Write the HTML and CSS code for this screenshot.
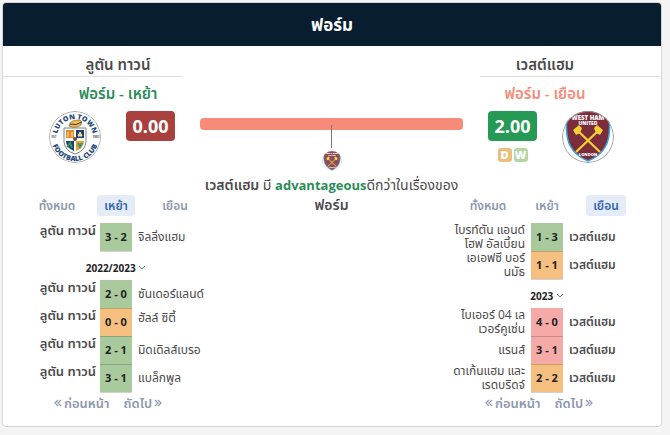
FILE: index.html
```html
<!DOCTYPE html>
<html lang="th">
<head>
<meta charset="utf-8">
<meta name="viewport" content="width=device-width, initial-scale=1">
<title>ฟอร์ม</title>
<link rel="stylesheet" href="styles.css">
</head>
<body>
<svg class="defs" aria-hidden="true">
  <symbol id="westham" viewBox="0 0 52 52">
    <circle cx="26" cy="26" r="25.5" fill="#fff"/>
    <path d="M7-2H45Q49 8 47 24Q45 42 26 50Q7 42 5 24Q3 8 7-2Z" fill="#7c2c3b" stroke="#37a5dc" stroke-width="1.6"/>
    <path d="M16 20 38 41M36 20 14 41" stroke="#f5d033" stroke-width="2.2"/>
    <path d="M11 19 17 14 20 17 18 22 14 24ZM41 19 35 14 32 17 34 22 38 24Z" fill="#f5d033"/>
    <text x="26" y="9" class="crest-wh">WEST HAM</text>
    <text x="26" y="14" class="crest-utd">UNITED</text>
    <text x="26" y="45" class="crest-london">LONDON</text>
    <circle cx="26" cy="26" r="25.5" fill="none" stroke="#9a9a9a"/>
  </symbol>
  <symbol id="luton" viewBox="0 0 52 52">
    <circle cx="26" cy="26" r="25.5" fill="#fff" stroke="#a8a8a8"/>
    <path id="arc-top" d="M8 26A18 18 0 0 1 44 26" fill="none"/>
    <path id="arc-bottom" d="M2 26A24 24 0 0 0 50 26" fill="none"/>
    <text class="crest-ring"><textPath href="#arc-top" startOffset="50%">LUTON TOWN</textPath></text>
    <text class="crest-ring"><textPath href="#arc-bottom" startOffset="50%">FOOTBALL CLUB</textPath></text>
    <text x="5" y="27" class="crest-year">EST</text>
    <text x="47" y="27" class="crest-year">1885</text>
    <path d="M15 17H37V31Q36 40 26 43Q16 40 15 31Z" fill="#fff" stroke="#788291"/>
    <path d="M17 19H25V27H17Z" fill="#e58a25"/><path d="M27 19H35V27H27Z" fill="#203e70"/>
    <path d="M17 30H25V40Q17 37 17 30Z" fill="#203e70"/><path d="M27 30H35Q35 37 27 40Z" fill="#e2a332"/>
    <path d="M19 21V26M23 21V26M29 25 31 21 33 25Z" stroke="#fff0c0" fill="#f0c34d"/>
    <path d="M18 36 21 32 23 37M29 32 31 36 33 32" stroke="#3f9460" stroke-width="2" fill="none"/>
    <circle cx="26" cy="28" r="2" fill="#7c4933"/>
    <path d="M20 15Q21 9 29 9Q34 9 32 14Q27 18 20 15Z" fill="#f4bd45" stroke="#8b5b24" stroke-width=".7"/>
    <path d="M21 13Q27 15 33 11" stroke="#203e70" fill="none"/>
  </symbol>
  <symbol id="prev" viewBox="0 0 8 8"><path d="M4 1 1 4 4 7M7 1 4 4 7 7" fill="none" stroke="currentColor" stroke-width="1.2"/></symbol>
  <symbol id="next" viewBox="0 0 8 8"><path d="M1 1 4 4 1 7M4 1 7 4 4 7" fill="none" stroke="currentColor" stroke-width="1.2"/></symbol>
  <symbol id="down" viewBox="0 0 8 8"><path d="M1 2 4 5 7 2" fill="none" stroke="currentColor"/></symbol>
</svg>

<main class="card">
  <h1 class="card-title">ฟอร์ม</h1>
  <div class="comparison">
    <section class="team home">
      <h2 class="team-name">ลูตัน ทาวน์</h2>
      <p class="team-side">ฟอร์ม - เหย้า</p>
      <div class="team-stats">
        <svg class="logo" role="img" aria-label="Luton Town"><use href="#luton"/></svg>
        <span class="points low">0.00</span>
      </div>
    </section>

    <section class="verdict">
      <div class="bar"></div>
      <div class="pointer"></div>
      <svg class="mini-logo" role="img" aria-label="West Ham"><use href="#westham"/></svg>
      <p class="verdict-text"><b>เวสต์แฮม</b> มี <b class="advantage">advantageous</b>ดีกว่าในเรื่องของ <b>ฟอร์ม</b></p>
    </section>

    <section class="team away">
      <h2 class="team-name">เวสต์แฮม</h2>
      <p class="team-side">ฟอร์ม - เยือน</p>
      <div class="team-stats">
        <div class="rating">
          <span class="points high">2.00</span>
          <div class="results"><span class="result draw">D</span><span class="result win">W</span></div>
        </div>
        <svg class="logo" role="img" aria-label="West Ham"><use href="#westham"/></svg>
      </div>
    </section>

    <section class="matches home-matches">
      <div class="tabs">
        <button type="button">ทั้งหมด</button>
        <button type="button" class="active">เหย้า</button>
        <button type="button">เยือน</button>
      </div>
      <table>
        <tbody>
          <tr><td class="own">ลูตัน ทาวน์</td><td class="score win">3 - 2</td><td>จิลลิ่งแฮม</td></tr>
          <tr class="season"><th colspan="3"><button type="button">2022/2023 <svg class="icon"><use href="#down"/></svg></button></th></tr>
          <tr><td class="own">ลูตัน ทาวน์</td><td class="score win">2 - 0</td><td>ซันเดอร์แลนด์</td></tr>
          <tr><td class="own">ลูตัน ทาวน์</td><td class="score draw">0 - 0</td><td class="raised">ฮัลล์ ซิตี้</td></tr>
          <tr><td class="own">ลูตัน ทาวน์</td><td class="score win">2 - 1</td><td>มิดเดิลส์เบรอ</td></tr>
          <tr><td class="own">ลูตัน ทาวน์</td><td class="score win">3 - 1</td><td>แบล็กพูล</td></tr>
        </tbody>
      </table>
      <nav class="pager"><a href="#"><svg class="icon"><use href="#prev"/></svg>ก่อนหน้า</a><a href="#">ถัดไป<svg class="icon"><use href="#next"/></svg></a></nav>
    </section>

    <section class="matches away-matches">
      <div class="tabs">
        <button type="button">ทั้งหมด</button>
        <button type="button">เหย้า</button>
        <button type="button" class="active">เยือน</button>
      </div>
      <table>
        <tbody>
          <tr><td>ไบรท์ตัน แอนด์<br>โฮฟ อัลเบี้ยน</td><td class="score win">1 - 3</td><td class="own">เวสต์แฮม</td></tr>
          <tr><td>เอเอฟซี บอร์<br>นมัธ</td><td class="score draw">1 - 1</td><td class="own">เวสต์แฮม</td></tr>
          <tr class="season"><th colspan="3"><button type="button">2023 <svg class="icon"><use href="#down"/></svg></button></th></tr>
          <tr><td>ไบเออร์ 04 เล<br>เวอร์คูเซ่น</td><td class="score loss">4 - 0</td><td class="own">เวสต์แฮม</td></tr>
          <tr><td>แรนส์</td><td class="score loss">3 - 1</td><td class="own">เวสต์แฮม</td></tr>
          <tr><td>ดาเก้นแฮม และ<br>เรดบริดจ์</td><td class="score draw">2 - 2</td><td class="own">เวสต์แฮม</td></tr>
        </tbody>
      </table>
      <nav class="pager"><a href="#"><svg class="icon"><use href="#prev"/></svg>ก่อนหน้า</a><a href="#">ถัดไป<svg class="icon"><use href="#next"/></svg></a></nav>
    </section>
  </div>
</main>
</body>
</html>
```
FILE: styles.css
```css
* { box-sizing: border-box; }
body {
  margin: 0;
  padding: 2px 8px 8px 2px;
  background: #f4f4f4;
  color: #4a4a4a;
  font: 12px/20px "Open Sans", "Noto Sans Thai", "Noto Sans", sans-serif;
}
h1, h2, p { margin: 0; }
button { border: 0; padding: 0; background: none; color: inherit; font: inherit; cursor: pointer; }
.defs { display: none; }
.card { background: #fff; border: 1px solid #d6d6d6; border-radius: 4px; overflow: hidden; }
.card-title { background: #081e30; color: #fff; font-size: 17px; line-height: 43px; text-align: center; }

.comparison {
  display: grid;
  grid-template-columns: 180fr 46fr 205fr 46fr 180fr;
  grid-template-rows: 149px auto;
  padding-right: 1px;
}
.team { grid-row: 1; }
.home { grid-column: 1; }
.away { grid-column: 5; }
.team-name { height: 31px; padding-top: 8px; border-bottom: 1px solid #dedede; font-size: 15px; line-height: 20px; font-weight: 600; text-align: center; }
.team-side { margin-top: 6px; font-size: 15px; line-height: 20px; font-weight: 600; text-align: center; }
.home .team-name, .home .team-side { padding-left: 50px; }
.away .team-name, .away .team-side { padding-right: 50px; }
.home .team-side { color: #2b8c57; }
.away .team-side { color: #f58b78; }
.team-stats { display: flex; justify-content: space-between; align-items: flex-start; margin-top: 8px; }
.home .team-stats { padding: 0 8px 0 46px; }
.away .team-stats { padding: 0 46px 0 8px; }
.logo { width: 52px; height: 52px; border-radius: 50%; overflow: hidden; }
.points { display: block; width: 49px; border-radius: 4px; color: #fff; font-size: 18px; line-height: 30px; font-weight: 700; text-align: center; }
.low { background: #a8413e; }
.high { background: #259a54; }
.results { display: flex; justify-content: center; gap: 2px; margin-top: 7px; }
.result { width: 14px; border-radius: 3px; color: #fff; font-size: 11px; line-height: 14px; font-weight: 800; text-align: center; }
.result.draw { background: #e9bf7e; }
.result.win { background: #b3d8a5; }

.verdict { grid-column: 2 / 5; grid-row: 1 / 3; padding: 72px 17px 0; text-align: center; }
.bar { height: 12px; border-radius: 4px; background: #f58b78; }
.pointer { position: relative; width: 1px; height: 23px; margin: -5px auto 3px; background: #777; }
.mini-logo { display: block; width: 20px; height: 20px; margin: 0 auto; border-radius: 50%; overflow: hidden; opacity: .85; }
.verdict-text { margin-top: 4px; font-size: 14px; line-height: 20px; }
.verdict-text b { font-weight: 600; }
.verdict-text .advantage { color: #2b8c57; font-size: 13px; font-weight: 700; }

.matches { grid-row: 2; padding-bottom: 13px; }
.home-matches { grid-column: 1 / 3; }
.away-matches { grid-column: 4 / 6; }
.tabs { display: grid; grid-template-columns: repeat(3, 59px); justify-content: center; justify-items: center; margin-bottom: 7px; }
.tabs button { padding: 0 7px; border-radius: 3px; color: #8c98ad; line-height: 21px; font-weight: 600; }
.tabs .active { background: #e4ecf7; color: #3766b1; }

table { width: 100%; table-layout: fixed; border-collapse: collapse; }
tr { height: 28px; }
td { padding: 0 6px; line-height: 14px; white-space: nowrap; }
td:first-child { text-align: right; }
td.own { font-weight: 600; }
.home-matches td:first-child { padding: 0 4px; font-size: 13px; vertical-align: top; }
td.raised { padding-bottom: 8px; }
td.score { width: 32px; padding: 0; border-bottom: 1px solid rgba(0, 0, 0, .18); color: #222; font-size: 11px; font-weight: 700; text-align: center; }
.score.win { background: #a8ca9d; }
.score.draw { background: #f5c07f; }
.score.loss { background: #f5aaa8; }
.season { height: 29px; }
.season th { padding: 4px 0 0; color: #222; font-size: 10px; line-height: 20px; font-weight: 700; text-align: center; }
.season button { vertical-align: top; }
.icon { width: 8px; height: 8px; color: #777; }
.pager { display: flex; justify-content: center; gap: 14px; padding-right: 16px; }
.pager a { display: flex; align-items: center; gap: 2px; color: #8c98ad; font-size: 13px; font-weight: 600; text-decoration: none; }
.pager .icon { color: inherit; }

svg text { font-family: "Open Sans", sans-serif; font-weight: 800; text-anchor: middle; }
.crest-wh { fill: #fff; font-size: 6px; }
.crest-utd { fill: #fff; font-size: 5px; }
.crest-london { fill: #fff; font-size: 4px; }
.crest-ring { fill: #24477b; font-size: 7px; }
.crest-year { fill: #777; font-size: 3px; }
```
